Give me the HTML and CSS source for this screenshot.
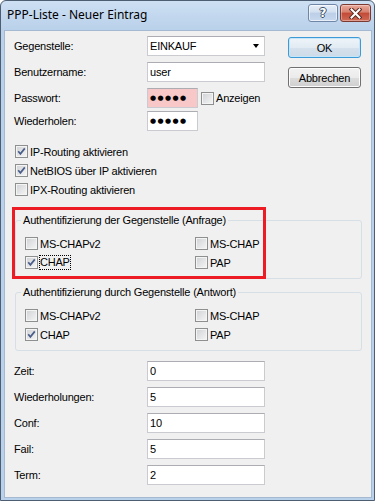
FILE: index.html
```html
<!DOCTYPE html>
<html lang="de">
<head>
    <meta charset="UTF-8">
    <meta name="viewport" content="width=device-width, initial-scale=1.0">
    <title>PPP-Liste - Neuer Eintrag</title>
    <link rel="stylesheet" href="styles.css">
</head>
<body>
    <div class="window">
        <div class="titlebar">
            <span class="title">PPP-Liste - Neuer Eintrag</span>
            <div class="caption">
                <span class="cap help">?</span>
                <span class="cap close">
                    <svg width="13" height="11" viewBox="0 0 13 11">
                        <path d="M2.5 1.5 L10.5 9.5 M10.5 1.5 L2.5 9.5" stroke="#5a2a22" stroke-width="4" stroke-linecap="square"/>
                        <path d="M2.5 1.5 L10.5 9.5 M10.5 1.5 L2.5 9.5" stroke="#fff" stroke-width="2" stroke-linecap="square"/>
                    </svg>
                </span>
            </div>
        </div>

        <div class="client">
            <div class="top">
                <div class="fields">
                    <div class="row">
                        <label>Gegenstelle:</label>
                        <div class="input select">EINKAUF<span class="arrow"></span></div>
                    </div>
                    <div class="row">
                        <label>Benutzername:</label>
                        <div class="input">user</div>
                    </div>
                    <div class="row tight">
                        <label>Passwort:</label>
                        <div class="input short pink"><span class="dots">●●●●●</span></div>
                        <span class="check inline"><span class="box"></span>Anzeigen</span>
                    </div>
                    <div class="row">
                        <label>Wiederholen:</label>
                        <div class="input short"><span class="dots">●●●●●</span></div>
                    </div>
                </div>
                <div class="actions">
                    <button class="btn default">OK</button>
                    <button class="btn">Abbrechen</button>
                </div>
            </div>

            <div class="checks">
                <div class="check"><span class="box"><svg viewBox="0 0 11 11"><path d="M2.2 5.2 L4.4 7.8 L8.8 2.4"/></svg></span>IP-Routing aktivieren</div>
                <div class="check"><span class="box"><svg viewBox="0 0 11 11"><path d="M2.2 5.2 L4.4 7.8 L8.8 2.4"/></svg></span>NetBIOS über IP aktivieren</div>
                <div class="check"><span class="box"></span>IPX-Routing aktivieren</div>
            </div>

            <fieldset class="group first">
                <legend>Authentifizierung der Gegenstelle (Anfrage)</legend>
                <div class="grid">
                    <div class="check"><span class="box"></span>MS-CHAPv2</div>
                    <div class="check"><span class="box"></span>MS-CHAP</div>
                    <div class="check"><span class="box"><svg viewBox="0 0 11 11"><path d="M2.2 5.2 L4.4 7.8 L8.8 2.4"/></svg></span><span class="focus">CHAP</span></div>
                    <div class="check"><span class="box"></span>PAP</div>
                </div>
            </fieldset>

            <fieldset class="group">
                <legend>Authentifizierung durch Gegenstelle (Antwort)</legend>
                <div class="grid">
                    <div class="check"><span class="box"></span>MS-CHAPv2</div>
                    <div class="check"><span class="box"></span>MS-CHAP</div>
                    <div class="check"><span class="box"><svg viewBox="0 0 11 11"><path d="M2.2 5.2 L4.4 7.8 L8.8 2.4"/></svg></span>CHAP</div>
                    <div class="check"><span class="box"></span>PAP</div>
                </div>
            </fieldset>

            <div class="fields bottom">
                <div class="row"><label>Zeit:</label><div class="input">0</div></div>
                <div class="row"><label>Wiederholungen:</label><div class="input">5</div></div>
                <div class="row"><label>Conf:</label><div class="input">10</div></div>
                <div class="row"><label>Fail:</label><div class="input">5</div></div>
                <div class="row"><label>Term:</label><div class="input">2</div></div>
            </div>

            <!-- red highlight drawn over the first group -->
            <div class="highlight"></div>
        </div>
    </div>
</body>
</html>
```

FILE: styles.css
```css
body {
    margin: 0;
    font-family: "Liberation Sans", Arial, sans-serif;
    font-size: 11px;
    letter-spacing: -0.2px;
    color: #000;
    background: #fff;
}
.window {
    width: 375px;
    height: 501px;
    box-sizing: border-box;
    border: 1px solid #4d5d72;
    border-radius: 6px 6px 0 0;
    padding: 0 2px 2px 3px;
    background: linear-gradient(#cddff3, #b9d1ea 29px, #b9d1ea);
    display: flex;
    flex-direction: column;
}
.titlebar {
    height: 29px;
    display: flex;
    align-items: flex-start;
    flex-shrink: 0;
}
.title {
    font-family: "Noto Sans", "Liberation Sans", sans-serif;
    font-size: 12px;
    letter-spacing: 0;
    line-height: 16px;
    margin: 6px 0 0 3px;
}
.caption {
    margin: 3px 1px 0 auto;
    display: flex;
    gap: 2px;
}
.cap {
    height: 18px;
    box-sizing: border-box;
    border-radius: 3px;
    display: flex;
    align-items: center;
    justify-content: center;
}
.help {
    width: 30px;
    border: 1px solid #6f86a6;
    background: linear-gradient(#e6eef8, #d3e0f0 45%, #bccfe7 50%, #c7d8ee);
    box-shadow: inset 0 0 0 1px rgba(255, 255, 255, 0.6);
    font-family: "DejaVu Sans", sans-serif;
    font-weight: bold;
    font-size: 12px;
    color: #fff;
    text-shadow: 1px 0 #3d4f68, -1px 0 #3d4f68, 0 1px #3d4f68, 0 -1px #3d4f68;
}
.close {
    width: 31px;
    border: 1px solid #7b3a31;
    background: linear-gradient(#e9a99b, #d77f6e 45%, #c24a37 50%, #cf6a55);
    box-shadow: inset 0 0 0 1px rgba(255, 255, 255, 0.35);
}
.client {
    flex: 1;
    position: relative;
    background: #f0f0f0;
    border: 1px solid #a5b9d1;
    padding: 5px 0 0 9px;
}
.top {
    display: flex;
}
.fields {
    display: flex;
    flex-direction: column;
}
.row {
    display: flex;
    align-items: center;
    height: 20px;
    margin-bottom: 6px;
}
.row.tight {
    margin-bottom: 3px;
}
.row:last-child {
    margin-bottom: 0;
}
.row label {
    width: 133px;
    flex-shrink: 0;
}
.input {
    width: 118px;
    height: 20px;
    box-sizing: border-box;
    border: 1px solid #c9cbd0;
    border-top-color: #abadb3;
    background: #fff;
    padding-left: 2px;
    display: flex;
    align-items: center;
}
.input.short {
    width: 51px;
}
.input.pink {
    background: #f8c8c8;
}
.select {
    position: relative;
}
.arrow {
    margin-left: auto;
    margin-right: 5px;
    border-left: 3.5px solid transparent;
    border-right: 3.5px solid transparent;
    border-top: 4px solid #000;
}
.dots {
    font-family: "DejaVu Sans", sans-serif;
    font-size: 7px;
    letter-spacing: 1.4px;
}
.actions {
    margin-left: auto;
    margin-right: 10px;
    padding-top: 1px;
    display: flex;
    flex-direction: column;
    gap: 9px;
}
.btn {
    width: 73px;
    height: 21px;
    border: 1px solid #707070;
    border-radius: 3px;
    font-family: inherit;
    font-size: 11px;
    letter-spacing: -0.2px;
    color: #000;
    padding: 0;
    background: linear-gradient(#f2f2f2, #ebebeb 50%, #dddddd 51%, #cfcfcf);
    box-shadow: inset 0 0 0 1px #fcfcfc;
}
.btn.default {
    border-color: #3c9bd6;
    background: linear-gradient(#eef4f9, #e2ebf3 50%, #d5e1ec 51%, #cddbe8);
    box-shadow: inset 0 0 0 1px #c5e5f8;
}
.checks {
    margin-top: 11px;
    margin-left: 1px;
}
.check {
    display: flex;
    align-items: center;
    height: 19px;
    gap: 2px;
}
.check.inline {
    margin-left: 3px;
}
.box {
    width: 13px;
    height: 13px;
    box-sizing: border-box;
    border: 1px solid #8e8f8f;
    background: linear-gradient(135deg, #cfd1d4, #f6f6f6);
    box-shadow: inset 0 0 0 1px #f4f4f4;
    flex-shrink: 0;
    display: flex;
}
.box svg {
    width: 11px;
    height: 11px;
}
.box path {
    fill: none;
    stroke: #4b5e8a;
    stroke-width: 1.7;
}
.focus {
    outline: 1px dotted #000;
    line-height: 13px;
}
.group {
    margin: 6px 9px 0 1px;
    padding: 7px 0 6px 9px;
    border: 1px solid #d5dfe5;
    border-radius: 3px;
}
.group.first {
    margin-top: 14px;
}
.group legend {
    margin-left: -4px;
    padding: 0 2px;
    line-height: 14px;
}
.grid {
    display: grid;
    grid-template-columns: 170px 1fr;
}
.bottom {
    margin-top: 10px;
}
.highlight {
    position: absolute;
    left: 7px;
    top: 176px;
    width: 254px;
    height: 72px;
    box-sizing: border-box;
    border: 3px solid #ed1c24;
}
```
